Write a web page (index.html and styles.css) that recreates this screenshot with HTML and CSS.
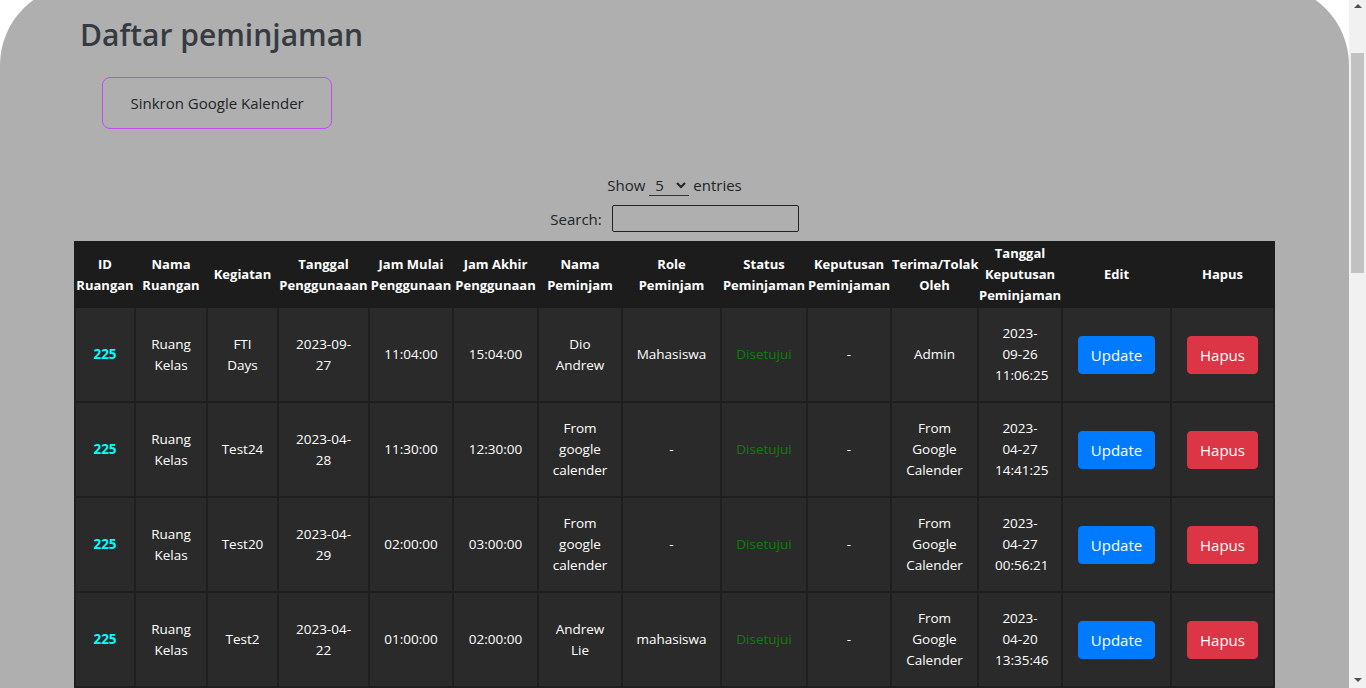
FILE: index.html
```html
<!DOCTYPE html>
<html lang="id">
<head>
<meta charset="utf-8">
<title>Daftar peminjaman</title>
<link rel="stylesheet" href="styles.css">
</head>
<body>
<main class="page">
  <h1 class="page-title">Daftar peminjaman</h1>
  <button class="sync-btn" type="button">Sinkron Google Kalender</button>

  <div class="dt-controls">
    <div class="dt-length">
      <span>Show</span>
      <select class="dt-select">
        <option>5</option>
        <option>10</option>
        <option>25</option>
      </select>
      <span>entries</span>
    </div>
    <div class="dt-search">
      <label for="q">Search:</label>
      <input id="q" class="dt-input" type="search">
    </div>
  </div>

  <table class="loan-table">
    <colgroup>
      <col style="width:60px"><col style="width:72px"><col style="width:71px"><col style="width:91px">
      <col style="width:84px"><col style="width:85px"><col style="width:84px"><col style="width:99px">
      <col style="width:86px"><col style="width:84px"><col style="width:87px"><col style="width:84px">
      <col style="width:109px"><col style="width:103px">
    </colgroup>
    <thead>
      <tr>
        <th>ID Ruangan</th>
        <th>Nama Ruangan</th>
        <th>Kegiatan</th>
        <th>Tanggal Penggunaaan</th>
        <th>Jam Mulai Penggunaan</th>
        <th>Jam Akhir Penggunaan</th>
        <th>Nama Peminjam</th>
        <th>Role Peminjam</th>
        <th>Status Peminjaman</th>
        <th>Keputusan Peminjaman</th>
        <th>Terima/Tolak Oleh</th>
        <th>Tanggal Keputusan Peminjaman</th>
        <th>Edit</th>
        <th>Hapus</th>
      </tr>
    </thead>
    <tbody>
      <tr>
        <td class="id">225</td>
        <td>Ruang Kelas</td>
        <td>FTI Days</td>
        <td>2023-09-27</td>
        <td>11:04:00</td>
        <td>15:04:00</td>
        <td>Dio Andrew</td>
        <td>Mahasiswa</td>
        <td class="status">Disetujui</td>
        <td>-</td>
        <td>Admin</td>
        <td class="decided">2023-09-26 11:06:25</td>
        <td><button class="btn btn-update" type="button">Update</button></td>
        <td><button class="btn btn-delete" type="button">Hapus</button></td>
      </tr>
      <tr>
        <td class="id">225</td>
        <td>Ruang Kelas</td>
        <td>Test24</td>
        <td>2023-04-28</td>
        <td>11:30:00</td>
        <td>12:30:00</td>
        <td>From google calender</td>
        <td>-</td>
        <td class="status">Disetujui</td>
        <td>-</td>
        <td>From Google Calender</td>
        <td class="decided">2023-04-27 14:41:25</td>
        <td><button class="btn btn-update" type="button">Update</button></td>
        <td><button class="btn btn-delete" type="button">Hapus</button></td>
      </tr>
      <tr>
        <td class="id">225</td>
        <td>Ruang Kelas</td>
        <td>Test20</td>
        <td>2023-04-29</td>
        <td>02:00:00</td>
        <td>03:00:00</td>
        <td>From google calender</td>
        <td>-</td>
        <td class="status">Disetujui</td>
        <td>-</td>
        <td>From Google Calender</td>
        <td class="decided">2023-04-27 00:56:21</td>
        <td><button class="btn btn-update" type="button">Update</button></td>
        <td><button class="btn btn-delete" type="button">Hapus</button></td>
      </tr>
      <tr>
        <td class="id">225</td>
        <td>Ruang Kelas</td>
        <td>Test2</td>
        <td>2023-04-22</td>
        <td>01:00:00</td>
        <td>02:00:00</td>
        <td>Andrew Lie</td>
        <td>mahasiswa</td>
        <td class="status">Disetujui</td>
        <td>-</td>
        <td>From Google Calender</td>
        <td class="decided">2023-04-20 13:35:46</td>
        <td><button class="btn btn-update" type="button">Update</button></td>
        <td><button class="btn btn-delete" type="button">Hapus</button></td>
      </tr>
      <tr>
        <td class="id">225</td>
        <td>Ruang Kelas</td>
        <td>Test1</td>
        <td>2023-04-21</td>
        <td>09:00:00</td>
        <td>10:00:00</td>
        <td>From google calender</td>
        <td>-</td>
        <td class="status">Disetujui</td>
        <td>-</td>
        <td>From Google Calender</td>
        <td class="decided">2023-04-20 13:30:12</td>
        <td><button class="btn btn-update" type="button">Update</button></td>
        <td><button class="btn btn-delete" type="button">Hapus</button></td>
      </tr>
    </tbody>
  </table>
</main>

<div class="scrollbar" aria-hidden="true">
  <span class="scroll-arrow scroll-arrow-up"></span>
  <div class="scroll-track"><span class="scroll-thumb"></span></div>
  <span class="scroll-arrow scroll-arrow-down"></span>
</div>
</body>
</html>
```

FILE: styles.css
```css
html, body {
  margin: 0;
  padding: 0;
}

body {
  background: #ffffff;
  font-family: "Open Sans", "Noto Sans", sans-serif;
  color: #212529;
  padding-right: 17px;
}

.page {
  background: #afafaf;
  border-radius: 80px 80px 0 0;
  margin-top: -15px;
  padding: 31px 0 60px;
  min-height: 2000px;
}

.page-title {
  margin: 0 0 0 80px;
  font-size: 30px;
  line-height: 38px;
  font-weight: 600;
  color: #363b42;
}

.sync-btn {
  display: block;
  margin: 23px 0 0 102px;
  padding: 13px 27.5px;
  border: 1px solid #c44cf2;
  border-radius: 8px;
  background: transparent;
  font-family: inherit;
  font-size: 15px;
  line-height: 24px;
  color: #212529;
}

.dt-controls {
  margin-top: 44px;
  display: flex;
  flex-direction: column;
  align-items: center;
  gap: 8px;
  font-size: 15px;
  color: #212529;
}

.dt-length {
  display: flex;
  align-items: center;
  gap: 4px;
  height: 24px;
}

.dt-select {
  width: 40px;
  height: 22px;
  border: 0;
  border-bottom: 1px solid #333;
  border-radius: 0;
  background: transparent;
  font-family: inherit;
  font-size: 15px;
  color: #212529;
  padding: 0 0 0 2px;
}

.dt-search {
  display: flex;
  align-items: center;
  gap: 10px;
  height: 27px;
}

.dt-input {
  box-sizing: border-box;
  width: 187px;
  height: 27px;
  border: 1px solid #222;
  border-radius: 2px;
  background: transparent;
  padding: 0 4px;
}

.loan-table {
  width: 1199px;
  margin: 9px auto 0;
  table-layout: fixed;
  border-collapse: collapse;
  color: #ffffff;
  font-size: 13.5px;
  line-height: 21px;
  text-align: center;
}

.loan-table th {
  background: #1c1c1c;
  border: 2px solid #1c1c1c;
  padding: 0;
  font-size: 13px;
  font-weight: 700;
  vertical-align: middle;
}

.loan-table td {
  background: #2a2a2a;
  border: 2px solid #1f1f1f;
  padding: 15px 12px;
  vertical-align: middle;
}

.loan-table td.decided {
  padding-left: 16px;
  padding-right: 16px;
}

.loan-table td.id {
  color: #00ffff;
  font-weight: 700;
}

.loan-table td.status {
  color: #0b800b;
}

.btn {
  padding: 6px 12px;
  border: 1px solid transparent;
  border-radius: 4px;
  font-family: inherit;
  font-size: 15px;
  line-height: 24px;
  color: #ffffff;
}

.btn-update {
  background: #007bff;
  border-color: #007bff;
}

.btn-delete {
  background: #dc3545;
  border-color: #dc3545;
}

/* window scrollbar (the page is scrolled content of a taller document) */
.scrollbar {
  position: fixed;
  top: 0;
  right: 0;
  bottom: 0;
  width: 17px;
  background: #f1f1f1;
  display: flex;
  flex-direction: column;
}

.scroll-arrow {
  height: 17px;
  flex: none;
  position: relative;
}

.scroll-arrow::after {
  content: "";
  position: absolute;
  left: 5px;
  border-left: 4px solid transparent;
  border-right: 4px solid transparent;
}

.scroll-arrow-up::after {
  top: 4px;
  border-bottom: 4px solid #505050;
}

.scroll-arrow-down::after {
  bottom: 6px;
  border-top: 4px solid #505050;
}

.scroll-track {
  flex: 1;
  padding: 36px 2px 0;
}

.scroll-thumb {
  display: block;
  height: 220px;
  background: #c1c1c1;
}
```
